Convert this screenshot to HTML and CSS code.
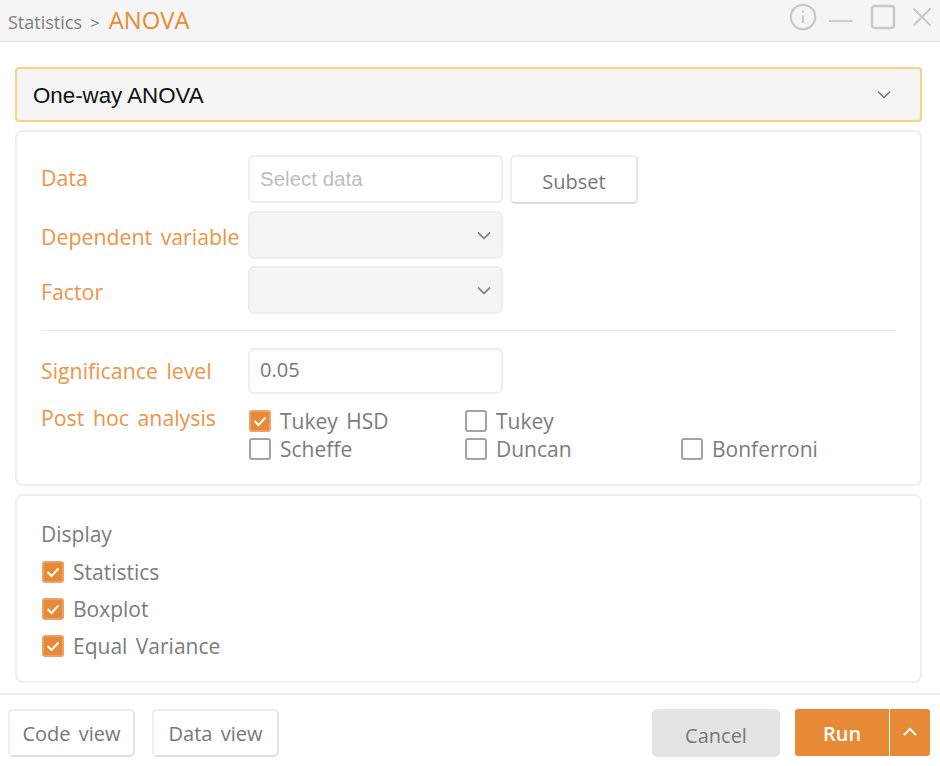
FILE: index.html
```html
<!DOCTYPE html>
<html lang="en">

<head>
  <meta charset="UTF-8">
  <meta name="viewport" content="width=device-width, initial-scale=1.0">
  <title>ANOVA</title>
  <link rel="stylesheet" href="styles.css">
</head>

<body>
  <header class="titlebar">
    <div class="crumbs">
      <span class="crumb-parent">Statistics</span>
      <span class="crumb-sep">&gt;</span>
      <span class="crumb-current">ANOVA</span>
    </div>
    <div class="window-icons">
      <svg class="icon-info" width="28" height="28" viewBox="0 0 28 28"><circle cx="14" cy="14" r="12.2" fill="none" stroke="#c8c8c8" stroke-width="2.2"/><path d="M14 12.5v7.5" stroke="#c8c8c8" stroke-width="2" fill="none"/><circle cx="14" cy="8.6" r="1.3" fill="#c8c8c8"/></svg>
      <svg class="icon-min" width="26" height="28" viewBox="0 0 26 28"><path d="M1 18h24" stroke="#cdcdcd" stroke-width="2" fill="none"/></svg>
      <svg class="icon-max" width="26" height="26" viewBox="0 0 26 26"><rect x="2" y="2" width="22" height="22" rx="2.5" fill="none" stroke="#c8c8c8" stroke-width="2.4"/></svg>
      <svg class="icon-close" width="20" height="20" viewBox="0 0 20 20"><path d="M1.5 1.5l17 17M18.5 1.5l-17 17" stroke="#c8c8c8" stroke-width="2" fill="none"/></svg>
    </div>
  </header>

  <main class="content">
    <div class="analysis-select">
      <span>One-way ANOVA</span>
      <svg class="chevron" width="14" height="9" viewBox="0 0 14 9"><path d="M1 1.5l6 6 6-6" stroke="#777" stroke-width="1.5" fill="none"/></svg>
    </div>

    <section class="panel panel-form">
      <div class="form-row row-data">
        <label class="field-label">Data</label>
        <div class="input placeholder">Select data</div>
        <button class="btn btn-subset">Subset</button>
      </div>
      <div class="form-row row-dep">
        <label class="field-label">Dependent variable</label>
        <div class="input select-box">
          <svg class="chevron" width="14" height="9" viewBox="0 0 14 9"><path d="M1 1.5l6 6 6-6" stroke="#888" stroke-width="1.8" fill="none"/></svg>
        </div>
      </div>
      <div class="form-row row-factor">
        <label class="field-label">Factor</label>
        <div class="input select-box">
          <svg class="chevron" width="14" height="9" viewBox="0 0 14 9"><path d="M1 1.5l6 6 6-6" stroke="#888" stroke-width="1.8" fill="none"/></svg>
        </div>
      </div>
      <hr class="divider">
      <div class="form-row row-sig">
        <label class="field-label">Significance level</label>
        <div class="input input-value">0.05</div>
      </div>
      <div class="form-row row-posthoc">
        <label class="field-label">Post hoc analysis</label>
        <div class="check-grid">
          <div class="check"><span class="box on"><svg width="22" height="22" viewBox="0 0 22 22"><path d="M5.5 11l4 4 7-7.5" stroke="#fff" stroke-width="2" fill="none"/></svg></span>Tukey HSD</div>
          <div class="check"><span class="box"></span>Tukey</div>
          <div></div>
          <div class="check"><span class="box"></span>Scheffe</div>
          <div class="check"><span class="box"></span>Duncan</div>
          <div class="check"><span class="box"></span>Bonferroni</div>
        </div>
      </div>
    </section>

    <section class="panel panel-display">
      <div class="display-title">Display</div>
      <div class="check"><span class="box on"><svg width="22" height="22" viewBox="0 0 22 22"><path d="M5.5 11l4 4 7-7.5" stroke="#fff" stroke-width="2" fill="none"/></svg></span>Statistics</div>
      <div class="check"><span class="box on"><svg width="22" height="22" viewBox="0 0 22 22"><path d="M5.5 11l4 4 7-7.5" stroke="#fff" stroke-width="2" fill="none"/></svg></span>Boxplot</div>
      <div class="check"><span class="box on"><svg width="22" height="22" viewBox="0 0 22 22"><path d="M5.5 11l4 4 7-7.5" stroke="#fff" stroke-width="2" fill="none"/></svg></span>Equal Variance</div>
    </section>
  </main>

  <footer class="footer">
    <div class="footer-left">
      <button class="btn btn-view">Code view</button>
      <button class="btn btn-view">Data view</button>
    </div>
    <div class="footer-right">
      <button class="btn-cancel">Cancel</button>
      <div class="run-group">
        <button class="btn-run">Run</button>
        <button class="btn-run-more">
          <svg width="16" height="10" viewBox="0 0 16 10"><path d="M2 8l6-6 6 6" stroke="#fff" stroke-width="2" fill="none"/></svg>
        </button>
      </div>
    </div>
  </footer>
</body>

</html>
```

FILE: styles.css
```css
*{
  box-sizing: border-box;
}
body{
  margin:0;
  width:940px;
  height:766px;
  overflow:hidden;
  background:#fff;
  font-family:"Open Sans","Noto Sans",sans-serif;
  font-size:21px;
  word-spacing:3px;
  color:#777;
}
button{
  font-family:inherit;
  word-spacing:inherit;
  margin:0;
}

/* title bar */
.titlebar{
  height:42px;
  background:#f5f5f5;
  border-bottom:1px solid #e3e3e3;
  display:flex;
  justify-content:space-between;
  padding:3px 8px 0 8px;
}
.crumbs{
  display:flex;
  align-items:baseline;
  line-height:34px;
}
.crumb-parent{
  font-size:18px;
  color:#7d7d7d;
}
.crumb-sep{
  font-size:17px;
  color:#7d7d7d;
  margin:0 9px 0 8px;
}
.crumb-current{
  font-size:23.8px;
  color:#e68a35;
}
.window-icons{
  display:flex;
  align-items:flex-start;
}
.icon-min{
  margin-left:11px;
}
.icon-max{
  margin-left:16px;
  margin-top:1px;
}
.icon-close{
  margin-left:16px;
  margin-top:4px;
}

/* main area */
.content{
  padding:25px 18px 0 15px;
}
.analysis-select{
  height:55px;
  background:#f5f5f5;
  border:2px solid #fbd27e;
  border-radius:4px;
  display:flex;
  align-items:center;
  justify-content:space-between;
  padding:2px 29px 0 16px;
  font-family:"Liberation Sans",sans-serif;
  font-size:22.3px;
  word-spacing:0;
  color:#111;
}
.analysis-select .chevron{
  margin-top:-2px;
}
.panel{
  border:2px solid #efefef;
  border-radius:8px;
  margin-top:8px;
  padding:0 24px;
}
.panel-form{
  height:356px;
  padding-top:23px;
}
.panel-display{
  height:189px;
  padding-top:24px;
}

/* form rows */
.form-row{
  display:flex;
  align-items:center;
}
.row-data{
  align-items:flex-start;
}
.row-data .field-label{
  line-height:46px;
}
.row-dep{
  margin-top:7px;
}
.row-factor{
  margin-top:7px;
}
.row-dep .field-label,
.row-factor .field-label{
  padding-top:2px;
}
.row-sig{
  margin-top:17px;
}
.row-sig .field-label{
  margin-bottom:2px;
}
.row-posthoc{
  margin-top:11px;
  align-items:flex-start;
}
.field-label{
  width:207px;
  flex:none;
  font-size:21.3px;
  color:#ec9447;
}
.row-posthoc .field-label{
  line-height:24px;
  padding-top:1px;
}
.input{
  width:255px;
  height:48px;
  border:2px solid #eee;
  border-radius:6px;
  background:#fff;
  padding:0 10px;
  display:flex;
  align-items:center;
}
.placeholder{
  font-family:"Liberation Sans",sans-serif;
  font-size:20.5px;
  word-spacing:0;
  color:#bdbdbd;
}
.select-box{
  background:#f5f5f5;
  justify-content:flex-end;
  padding-right:10px;
}
.input-value{
  height:46px;
  padding-bottom:4px;
  font-size:20px;
  color:#777;
}
.divider{
  border:0;
  border-top:1px solid #e9e9e9;
  margin:16px 0 0 0;
}
.btn{
  background:#fff;
  border:2px solid #eee;
  border-bottom-color:#ddd;
  border-right-color:#e4e4e4;
  border-radius:5px;
  color:#777;
  font-size:20px;
}
.btn-subset{
  width:128px;
  height:49px;
  margin-left:7px;
  padding-top:4px;
}

/* checkboxes */
.check{
  display:flex;
  align-items:center;
  height:24px;
  font-size:21px;
  line-height:24px;
  color:#7b7b7b;
}
.box{
  width:22px;
  height:22px;
  flex:none;
  border:2px solid #a3a3a3;
  border-radius:3px;
  background:#fff;
  margin-right:9px;
  margin-left:1px;
}
.box.on{
  background:#e68a35;
  border-color:#eca266;
}
.box svg{
  display:block;
  margin:-2px;
}
.check-grid{
  display:grid;
  grid-template-columns:216px 216px 216px;
  row-gap:4px;
  margin-top:4px;
}
.display-title{
  font-size:21px;
  line-height:28px;
  color:#7b7b7b;
  margin-bottom:5px;
}
.panel-display .check{
  height:37px;
}

/* footer */
.footer{
  margin-top:10px;
  border-top:2px solid #eee;
  padding:14px 10px 0 8px;
  display:flex;
  justify-content:space-between;
}
.footer-left{
  display:flex;
  gap:17px;
}
.btn-view{
  width:127px;
  height:48px;
}
.footer-right{
  display:flex;
  gap:15px;
}
.btn-cancel{
  width:128px;
  height:48px;
  background:#e4e4e4;
  border:0;
  border-radius:5px;
  color:#777;
  font-size:20px;
  padding-top:6px;
}
.run-group{
  display:flex;
  gap:1px;
}
.btn-run{
  width:94px;
  height:47px;
  background:#e68a35;
  border:0;
  border-radius:3px 0 0 3px;
  color:#fff;
  font-size:20px;
  font-weight:600;
  padding-top:2px;
}
.btn-run-more{
  width:40px;
  height:47px;
  background:#e68a35;
  border:0;
  border-radius:0 3px 3px 0;
  padding:0 0 2px 0;
}
```
